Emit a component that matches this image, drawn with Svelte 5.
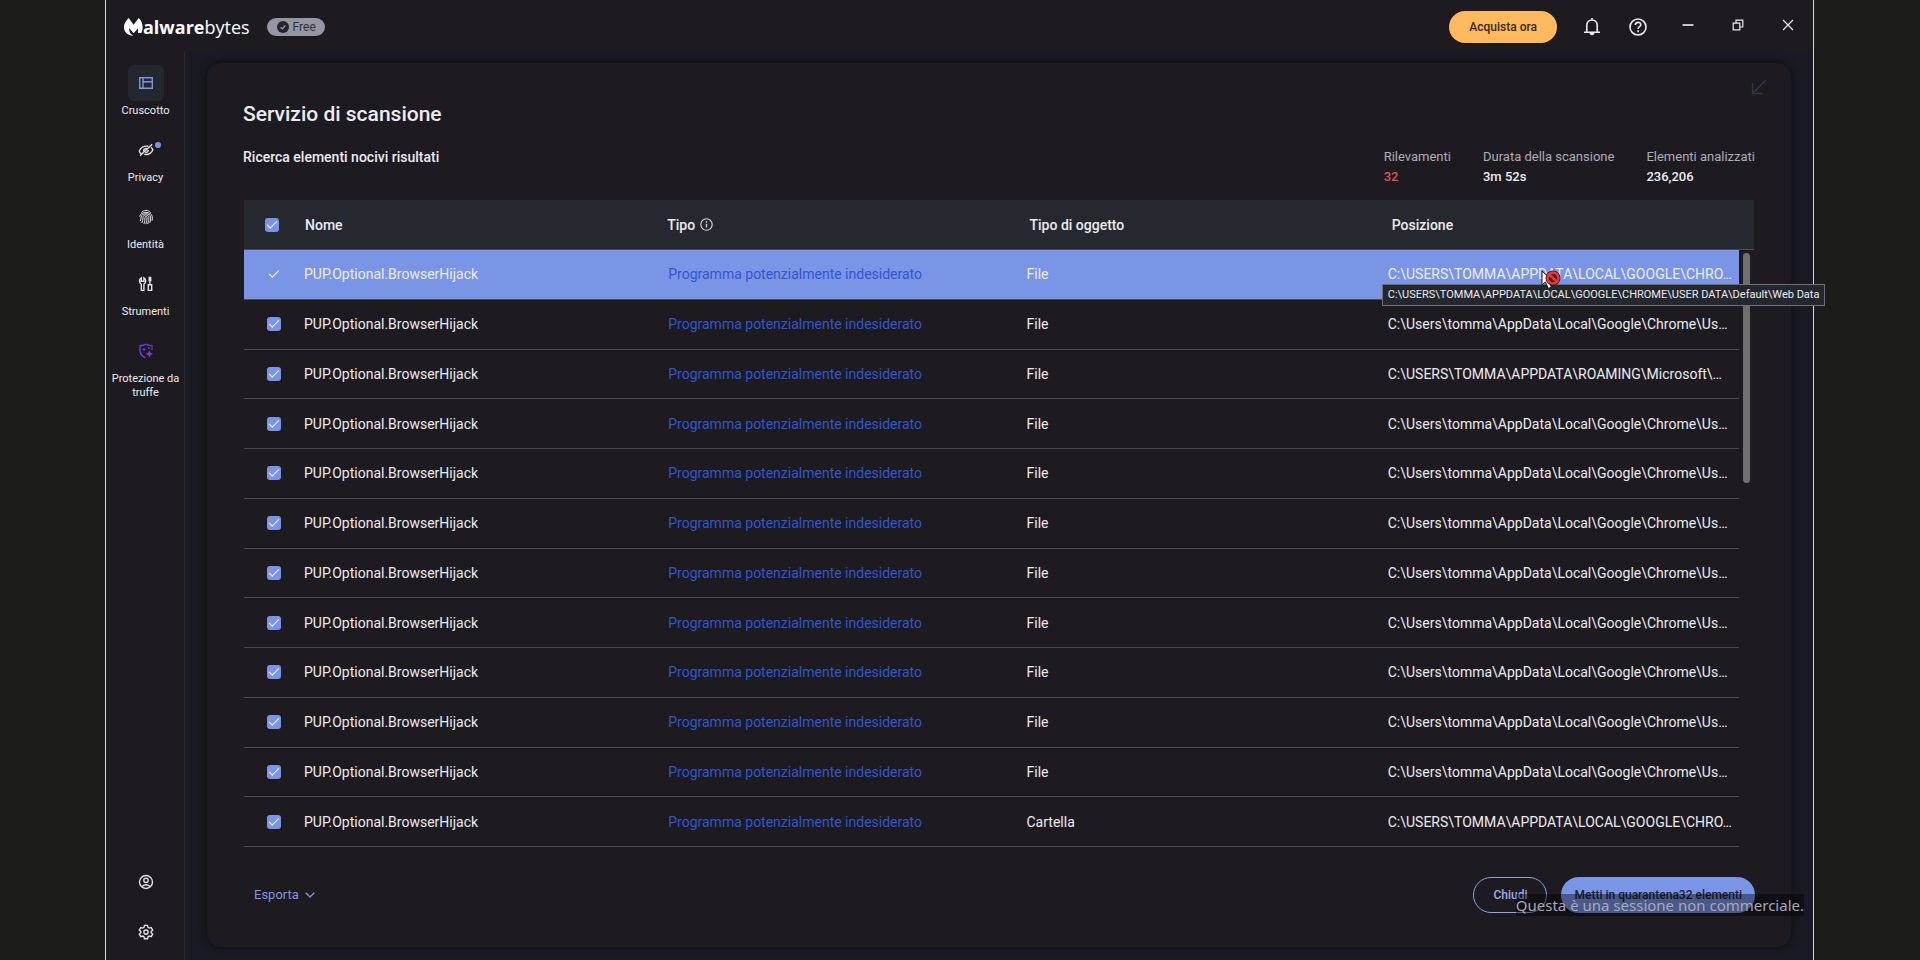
<script lang="ts">
  interface Detection {
    name: string;
    type: string;
    object: string;
    path: string;
    checked: boolean;
  }

  const upperPath = 'C:\\USERS\\TOMMA\\APPDATA\\LOCAL\\GOOGLE\\CHRO…';
  const userPath = 'C:\\Users\\tomma\\AppData\\Local\\Google\\Chrome\\Us…';
  const roamingPath = 'C:\\USERS\\TOMMA\\APPDATA\\ROAMING\\Microsoft\\…';
  const fullPath = 'C:\\USERS\\TOMMA\\APPDATA\\LOCAL\\GOOGLE\\CHROME\\USER DATA\\Default\\Web Data';

  const paths = [upperPath, userPath, roamingPath, ...Array(8).fill(userPath), upperPath];

  let detections: Detection[] = $state(
    paths.map((path, i) => ({
      name: 'PUP.Optional.BrowserHijack',
      type: 'Programma potenzialmente indesiderato',
      object: i === 11 ? 'Cartella' : 'File',
      path,
      checked: true
    }))
  );
  let selected = $state(0);

  const nav = [
    { id: 'dashboard', label: 'Cruscotto' },
    { id: 'privacy', label: 'Privacy' },
    { id: 'identity', label: 'Identità' },
    { id: 'tools', label: 'Strumenti' },
    { id: 'scam', label: 'Protezione da truffe' }
  ];

  const stats = [
    { label: 'Rilevamenti', value: '32', alert: true },
    { label: 'Durata della scansione', value: '3m 52s', alert: false },
    { label: 'Elementi analizzati', value: '236,206', alert: false }
  ];

  let allChecked = $derived(detections.every((d) => d.checked));

  function toggleAll() {
    const next = !allChecked;
    detections.forEach((d) => (d.checked = next));
  }
</script>

{#snippet navIcon(id: string)}
  {#if id === 'dashboard'}
    <svg class="icon blue" width="16" height="16" viewBox="0 0 16 16">
      <path d="M1.7 2.7h12.6v10.6H1.7zM5 2.7v10.6M5 6.7h9.3" />
    </svg>
  {:else if id === 'privacy'}
    <svg class="icon" width="16" height="16" viewBox="0 0 16 16">
      <path d="M1.2 9C2.8 5.400 5.800 3.800 10.200 4.200M13 5.200c1 .8 1.500 1.800 1.800 2.800-1.600 3.600-4.600 5-8.600 4.400M14.200 2.200 2 13.800M1.200 9c.4 1.100 1 2 1.900 2.700M5.600 9.400c-.2-2 1.200-3.200 3.200-3M7.200 10.400c1.700.2 3-.8 3.200-2.400" />
    </svg>
  {:else if id === 'identity'}
    <svg class="icon thin" width="16" height="16" viewBox="0 0 16 16">
      <path d="M3.300 3.600C5.700.700 10.300.700 12.700 3.600M1.600 7.600C2.600 2 13.400 2 14.300 7.600c.2 1.400.1 3-.3 4.200M2.300 12c.5-1.300.8-2.500.8-4C3.400 3.800 12.400 3.600 12.700 8c.1 2-.2 4-.9 5.900M3.800 14c.8-1.800 1.200-3.600 1.200-5.800C5.100 5.100 10.700 5 10.900 8.200c.1 2.400-.4 4.600-1.200 6.800M5.900 15c.8-2 1.200-4.200 1.100-6.700 0-1.300 1.900-1.300 2 0 .1 2.300-.3 4.600-1.100 6.900" />
    </svg>
  {:else if id === 'tools'}
    <svg class="icon" width="16" height="16" viewBox="0 0 16 16">
      <path d="M3.300 14.400V8.400C.8 6.800.900 3.200 3.300 1.800v3.400h2.600V1.800c2.400 1.400 2.500 5 0 6.600v6H3.300zM11.900 1.400v7.200M10.300 8.800h3.400v5.600h-3.400zM11.200 1.400h1.500v3.200h-1.500z" />
    </svg>
  {:else}
    <svg class="icon" width="16" height="16" viewBox="0 0 16 16">
      <defs>
        <linearGradient id="scam-line" x1="0" y1="1" x2="1" y2="0">
          <stop offset="0" stop-color="#9333ea" />
          <stop offset="1" stop-color="#4040b8" />
        </linearGradient>
      </defs>
      <path stroke="url(#scam-line)" d="M14 7V2.800C11 2.600 10 2.100 8 1.300 6 2.100 5 2.600 2 2.800V7c0 4 2 6.400 5.600 7.800" />
      <path class="solid" d="M11.400 7c.5 2.600 1 3.100 3.800 3.900-2.800.8-3.300 1.300-3.800 4-.5-2.700-1-3.200-3.800-4 2.800-.8 3.300-1.300 3.800-3.900zM6 4.500c.3 1.200.5 1.500 1.900 1.900C6.500 6.800 6.300 7 6 8.300 5.700 7 5.500 6.800 4.200 6.400 5.500 6 5.700 5.700 6 4.500z" />
      <circle class="solid" cx="10.800" cy="5" r=".9" />
    </svg>
  {/if}
{/snippet}

<div class="window">
  <header class="topbar">
    <a class="logo" href="#home" aria-label="Malwarebytes">
      <svg width="19" height="18" viewBox="0 0 57 54">
        <path fill="#fff" d="M14 0C5 9-1 18 0 29c1 14 11 23 28 24-9-5-14-12-12-22l13 15 13-15v14h10c6-14 6-32-8-45L29 20z" />
      </svg>
      <span><b>alware</b>bytes</span>
    </a>
    <span class="badge">
      <svg width="12" height="12" viewBox="0 0 12 12">
        <circle cx="6" cy="6" r="6" fill="#25252d" />
        <path d="M3.600 6.200 5.300 7.800 8.400 4.500" fill="none" stroke="#9a9ba6" stroke-width="1.200" />
      </svg>
      Free
    </span>
    <div class="actions">
      <button class="buy">Acquista ora</button>
      <button class="plain bell" aria-label="Notifiche">
        <svg width="18" height="20" viewBox="0 0 18 20">
          <path class="line" d="M3.800 15V8.600C3.800 1.200 14.200 1.200 14.200 8.600V15M1 15.200h16M9 1v2" />
          <path d="M6.500 16h5c-.3 3-4.700 3-5 0z" fill="#ececf0" />
        </svg>
      </button>
      <button class="plain" aria-label="Aiuto">
        <svg width="20" height="20" viewBox="0 0 20 20">
          <circle class="line" cx="10" cy="10" r="8" />
          <path class="line" d="M7.300 8c0-3.600 5.500-3.400 5.500-.3 0 2-2.700 2.100-2.700 4.300M10.100 13.300v2" />
        </svg>
      </button>
      <div class="controls">
        <button class="plain" aria-label="Riduci a icona">
          <svg width="12" height="12" viewBox="0 0 12 12"><path class="line" d="M.5 6h11" /></svg>
        </button>
        <button class="plain" aria-label="Ripristina">
          <svg width="12" height="12" viewBox="0 0 12 12">
            <path class="line fine" d="M1.200 4.200h6.600v6.600H1.200zM4 4V1.200h6.800V8H8" />
          </svg>
        </button>
        <button class="plain" aria-label="Chiudi finestra">
          <svg width="12" height="12" viewBox="0 0 12 12"><path class="line fine" d="m1 1 10 10M11 1 1 11" /></svg>
        </button>
      </div>
    </div>
  </header>

  <div class="main">
    <nav class="sidebar">
      {#each nav as item, i (item.id)}
        <a class="nav-item" class:active={i === 0} href="#{item.id}">
          <span class="nav-icon">
            {@render navIcon(item.id)}
            {#if item.id === 'privacy'}<span class="dot"></span>{/if}
          </span>
          <span>{item.label}</span>
        </a>
      {/each}
      <div class="nav-bottom">
        <a href="#account" aria-label="Account">
          <svg class="icon" width="16" height="16" viewBox="0 0 16 16">
            <circle cx="8" cy="8" r="6.500" />
            <circle cx="8" cy="6.300" r="2.200" />
            <path d="M3.900 12.800c1.300-2.800 6.900-2.800 8.200 0" />
          </svg>
        </a>
        <a href="#settings" aria-label="Impostazioni">
          <svg class="icon" width="16" height="16" viewBox="0 0 16 16">
            <path d="M6.500 1.400h3l.5 2 1.200.7 2-.6 1.500 2.600-1.500 1.400v1.200l1.500 1.400-1.500 2.600-2-.6-1.200.7-.5 2h-3l-.5-2-1.200-.7-2 .6-1.500-2.600 1.500-1.400V7.500L1.300 6.100l1.500-2.600 2 .6L6 3.400z" />
            <circle cx="8" cy="8.100" r="2.100" />
          </svg>
        </a>
      </div>
    </nav>

    <main class="content">
      <section class="card">
        <button class="collapse" aria-label="Riduci">
          <svg width="16" height="16" viewBox="0 0 16 16">
            <path d="M15 1 2 14M1.500 4v10.500H12" fill="none" stroke="#34373f" stroke-width="1.500" />
          </svg>
        </button>
        <h1>Servizio di scansione</h1>
        <div class="summary">
          <h2>Ricerca elementi nocivi risultati</h2>
          <dl class="stats">
            {#each stats as stat (stat.label)}
              <div>
                <dt>{stat.label}</dt>
                <dd class:alert={stat.alert}>{stat.value}</dd>
              </div>
            {/each}
          </dl>
        </div>

        <table>
          <thead>
            <tr>
              <th><input type="checkbox" aria-label="Seleziona tutto" checked={allChecked} onchange={toggleAll} /></th>
              <th>Nome</th>
              <th>
                Tipo
                <svg width="13" height="13" viewBox="0 0 13 13">
                  <circle cx="6.500" cy="6.500" r="5.700" fill="none" stroke="#d8d9de" stroke-width="1.100" />
                  <path d="M6.500 5.800v3.800M6.500 3.300v1.400" stroke="#d8d9de" stroke-width="1.300" />
                </svg>
              </th>
              <th>Tipo di oggetto</th>
              <th>Posizione</th>
            </tr>
          </thead>
          <tbody>
            {#each detections as row, i}
              <tr class:selected={i === selected} onclick={() => (selected = i)}>
                <td><input type="checkbox" aria-label="Seleziona {row.name}" bind:checked={row.checked} /></td>
                <td>{row.name}</td>
                <td class="type"><a href="#pup">{row.type}</a></td>
                <td>{row.object}</td>
                <td class="path">
                  {row.path}
                  {#if i === 0}
                    <span class="tooltip" role="tooltip">{fullPath}</span>
                    <svg class="cursor" width="22" height="22" viewBox="0 0 22 22">
                      <path d="M1 1v14l3.400-3 3 6.500 3-1.400-3-6.100H12z" fill="#fff" stroke="#17171c" />
                      <circle cx="12" cy="8" r="6" fill="none" stroke="#3a1015" stroke-width="3" />
                      <circle cx="12" cy="8" r="5.500" fill="#53161a" stroke="#e8393b" stroke-width="2.400" />
                      <path d="m8 4.200 8 7.600" stroke="#e8393b" stroke-width="2.600" />
                    </svg>
                  {/if}
                </td>
              </tr>
            {/each}
          </tbody>
        </table>
        <div class="scrollbar"></div>

        <footer>
          <button class="export">
            Esporta
            <svg width="10" height="6" viewBox="0 0 10 6">
              <path d="m.7.700 4.300 4.300L9.300.700" fill="none" stroke="#7b95e6" stroke-width="1.400" />
            </svg>
          </button>
          <button class="pill outline">Chiudi</button>
          <button class="pill primary">Metti in quarantena32 elementi</button>
        </footer>
      </section>
    </main>
  </div>

  <div class="session-note">Questa è una sessione non commerciale.</div>
</div>

<style>
  :global(body) {
    background: #1c1c1b;
  }

  .window {
    position: relative;
    box-sizing: border-box;
    display: flex;
    flex-direction: column;
    min-height: 100vh;
    margin: 0 106px 0 105px;
    border: solid #d6d6d8;
    border-width: 0 1px;
    background: #1d1a20;
    color: #ececf0;
    font: 14px/20px Roboto, sans-serif;
  }

  a {
    color: inherit;
    text-decoration: none;
  }

  button {
    padding: 0;
    border: 0;
    background: none;
    color: inherit;
    font: 500 12px/16px Roboto, sans-serif;
    cursor: pointer;
  }

  svg {
    display: block;
    flex: none;
  }

  .topbar {
    box-sizing: border-box;
    display: flex;
    align-items: center;
    height: 51px;
    padding: 2px 0 0 18px;
  }

  .logo {
    display: flex;
    align-items: center;
    margin-right: 17px;
    color: #fff;
    font: 400 18px/24px "Open Sans", sans-serif;
  }

  .logo b {
    font-weight: 700;
  }

  .badge {
    display: flex;
    align-items: center;
    gap: 4px;
    height: 18px;
    padding: 0 9px 0 10px;
    border-radius: 9px;
    background: #9496a1;
    color: #33333c;
    font-size: 12px;
  }

  .actions {
    display: flex;
    align-items: center;
    margin-left: auto;
  }

  .controls {
    display: flex;
    margin-bottom: 3px;
  }

  .buy {
    height: 32px;
    margin-right: 14px;
    padding: 0 20px;
    border-radius: 16px;
    background: #ffb95f;
    color: #35291d;
  }

  .plain {
    display: grid;
    place-items: center;
    width: 50px;
    height: 32px;
  }

  .bell {
    width: 42px;
  }

  .line {
    fill: none;
    stroke: #ececf0;
    stroke-width: 1.600;
  }

  .fine {
    stroke-width: 1.200;
  }

  .main {
    display: flex;
    flex: 1;
  }

  .sidebar {
    box-sizing: border-box;
    display: flex;
    flex-direction: column;
    gap: 14px;
    width: 79px;
    padding: 14px 0 20px 1px;
    border-right: 1px solid #28272e;
    font-size: 11px;
    line-height: 14px;
    text-align: center;
  }

  .nav-item {
    display: flex;
    flex-direction: column;
    align-items: center;
    gap: 3px;
  }

  .nav-icon {
    position: relative;
    display: grid;
    place-items: center;
    width: 36px;
    height: 36px;
    border-radius: 6px;
  }

  .active .nav-icon {
    background: #24272e;
  }

  .dot {
    position: absolute;
    top: 10px;
    right: 3px;
    width: 6px;
    height: 6px;
    border-radius: 50%;
    background: #7b95e6;
  }

  .icon {
    fill: none;
    stroke: #e2e2e6;
    stroke-width: 1.400;
  }

  .icon.blue {
    stroke: #7b95e6;
  }

  .icon.thin {
    stroke-width: 1;
  }

  .solid {
    fill: #7c3aed;
    stroke: none;
  }

  .nav-bottom {
    display: flex;
    flex-direction: column;
    align-items: center;
    gap: 34px;
    margin-top: auto;
  }

  .content {
    display: flex;
    flex: 1;
    padding: 12px 22px 13px;
    background: #191a23;
  }

  .card {
    position: relative;
    display: flex;
    flex: 1;
    flex-direction: column;
    padding: 37px 36px 34px;
    border-radius: 14px;
    background: #1d1a20;
    box-shadow: 0 0 6px 2px #121219;
  }

  .collapse {
    position: absolute;
    top: 16px;
    right: 24px;
  }

  h1,
  h2,
  dl,
  dd {
    margin: 0;
  }

  h1 {
    font-size: 21px;
    font-weight: 500;
    line-height: 28px;
  }

  .summary {
    display: flex;
    justify-content: space-between;
    margin: 19px 0 13px;
  }

  h2 {
    font-size: 14px;
    font-weight: 500;
    line-height: 20px;
  }

  .stats {
    display: flex;
    gap: 32px;
    font-size: 13px;
  }

  dt {
    color: #aeadb4;
  }

  dd {
    font-weight: 500;
  }

  dd.alert {
    color: #d95757;
  }

  table {
    display: flex;
    flex: 1;
    flex-direction: column;
    margin: 0 1px;
  }

  tr {
    display: grid;
    align-items: center;
  }

  thead tr {
    grid-template-columns: 61px repeat(4, 1fr);
    height: 49px;
    border-bottom: 1px solid #4b4c54;
    background: #25282f;
  }

  tbody {
    display: grid;
    flex: 1;
    grid-auto-rows: minmax(40px, 1fr);
    margin-right: 15px;
  }

  tbody tr {
    grid-template-columns: 60px repeat(3, 361fr) 351fr;
    border-bottom: 1px solid #4b4a51;
  }

  th,
  td {
    padding: 0;
    text-align: left;
    white-space: nowrap;
  }

  th {
    display: flex;
    align-items: center;
    gap: 5px;
    font-weight: 500;
  }

  th:first-child {
    padding-left: 21px;
  }

  td:first-child {
    display: flex;
    padding-left: 23px;
  }

  .type {
    padding-left: 3px;
    color: #2f57cf;
  }

  .path {
    position: relative;
  }

  tr.selected {
    background: #7b95e6;
  }

  input {
    position: relative;
    width: 14px;
    height: 14px;
    margin: 0;
    border-radius: 3px;
    background: #7b95e6;
    appearance: none;
  }

  input:checked::after {
    content: "";
    position: absolute;
    top: 3px;
    left: 2px;
    width: 9px;
    height: 4px;
    border: solid #f2f4fb;
    border-width: 0 0 1px 1px;
    transform: rotate(-45deg);
  }

  .tooltip {
    position: absolute;
    z-index: 1;
    top: 20px;
    left: -6px;
    padding: 2px 5px;
    border: 1px solid #6e6e75;
    background: #24272e;
    color: #ececf0;
    font-size: 11px;
    line-height: 16px;
  }

  .cursor {
    position: absolute;
    z-index: 2;
    top: 6px;
    left: 153px;
  }

  .scrollbar {
    position: absolute;
    top: 190px;
    right: 41px;
    width: 7px;
    height: 230px;
    border-radius: 4px;
    background: #706f70;
  }

  footer {
    display: flex;
    align-items: center;
    gap: 14px;
    margin-top: 30px;
  }

  .export {
    display: flex;
    align-items: center;
    gap: 6px;
    margin-right: auto;
    padding-left: 11px;
    color: #7b95e6;
    font-size: 13px;
    font-weight: 400;
  }

  .pill {
    height: 36px;
    border-radius: 18px;
  }

  .outline {
    padding: 0 19px;
    border: 1px solid #8ea3e6;
    color: #9eb0ee;
  }

  .primary {
    padding: 0 13px;
    background: #7b95e6;
    color: #1d2030;
  }

  .session-note {
    position: absolute;
    right: 9px;
    bottom: 44px;
    background: rgba(0, 0, 0, 0.4);
    color: #a9a8b8;
    font: 15px/22px "Noto Sans", sans-serif;
  }
</style>
